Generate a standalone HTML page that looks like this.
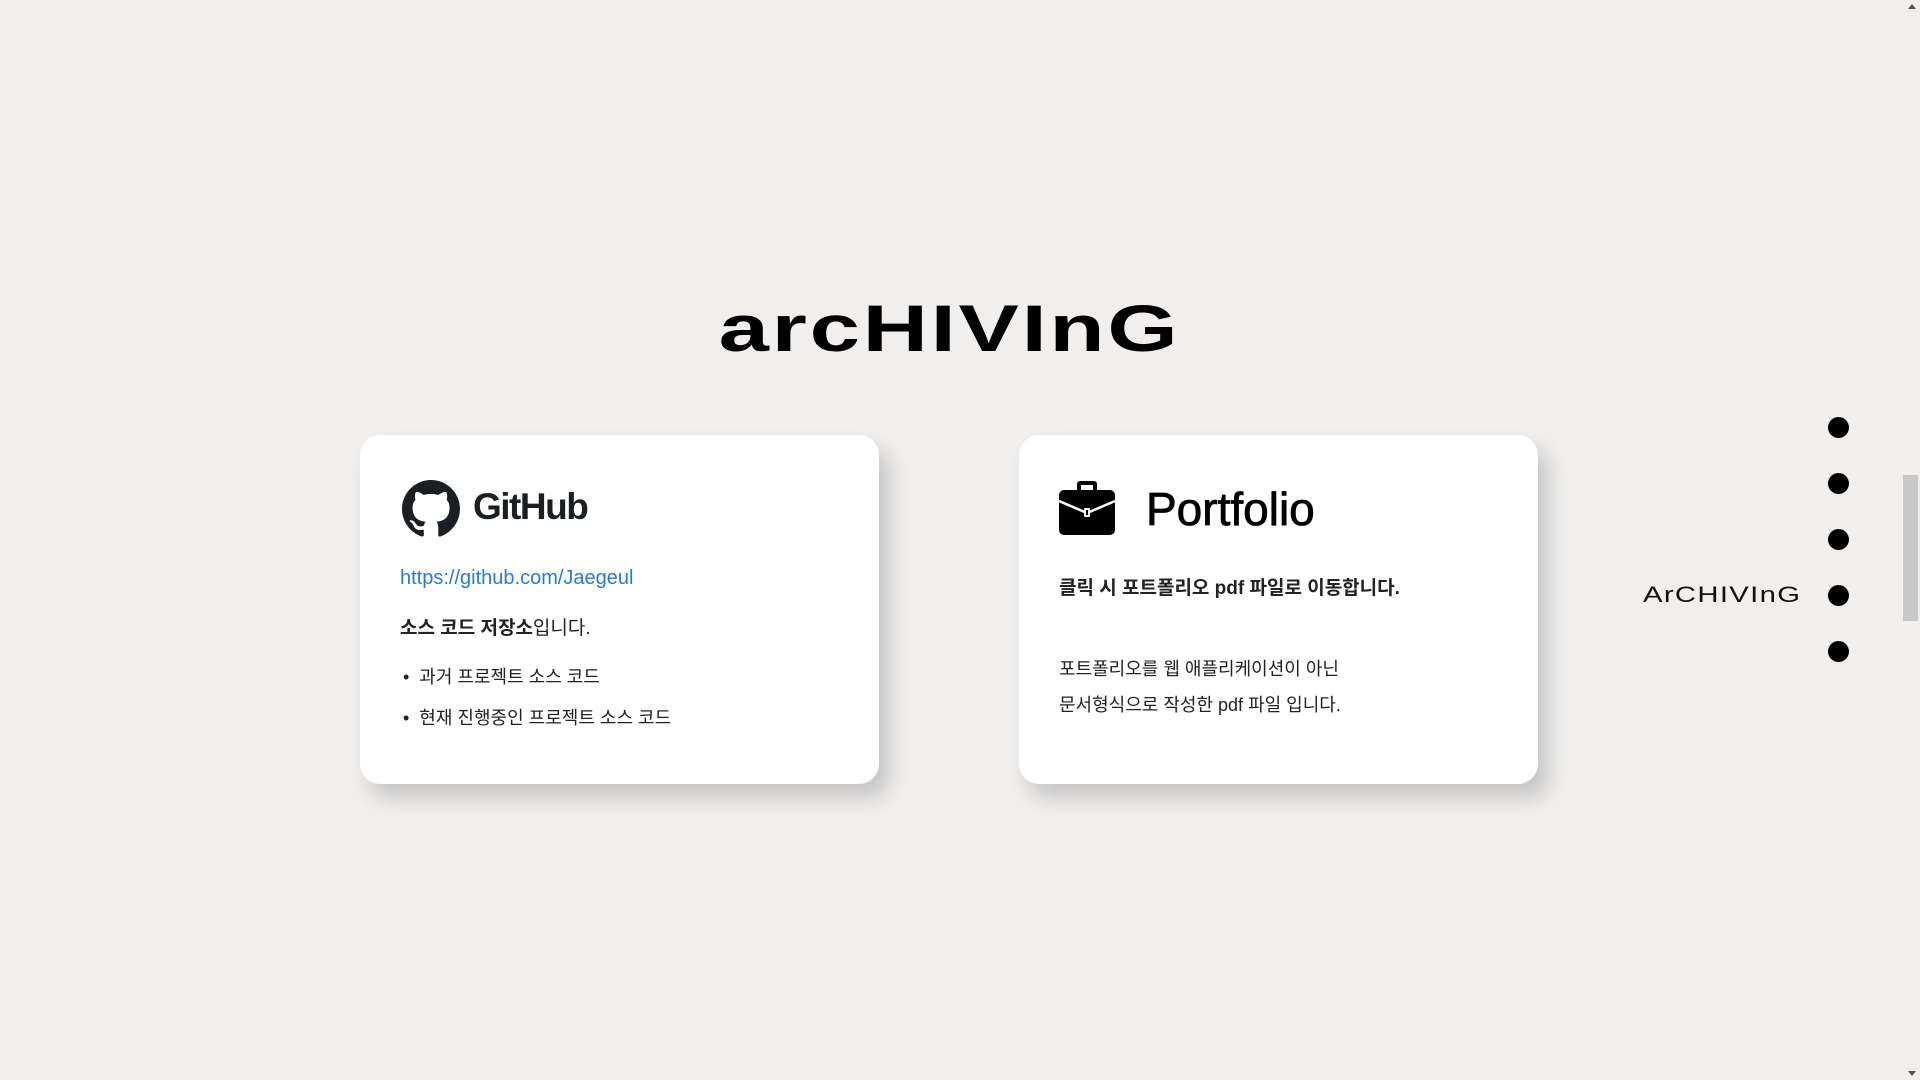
<!DOCTYPE html>
<html><head><meta charset="utf-8"><style>
*{margin:0;padding:0;box-sizing:border-box}
body{width:1920px;height:1080px;background:#f0efee;font-family:"Liberation Sans","Noto Sans CJK KR",sans-serif;position:relative;overflow:hidden;color:#222}
.title{position:absolute;left:0;width:1900px;top:290px;text-align:center;font-size:66px;font-weight:bold;letter-spacing:2px;color:#000}
.title span{display:inline-block;transform:scaleX(1.37);transform-origin:center}
.card{position:absolute;top:435px;width:519px;height:349px;background:#fff;border-radius:20px;box-shadow:10px 14px 22px rgba(0,0,0,.18)}
.abs{position:absolute;white-space:nowrap}
.dot{position:absolute;left:1828px;width:21px;height:21px;border-radius:50%;background:#000}
.sb{position:absolute;right:0;top:0;width:17px;height:1080px;background:#f0efee}
.thumb{position:absolute;right:2px;top:475px;width:15px;height:146px;background:#c8c8c8}
</style></head><body>
<div class="title"><span>arcHIVInG</span></div>

<div class="card" style="left:360px">
 <svg class="abs" style="left:42px;top:45px" width="58" height="58" viewBox="0 0 16 16"><path fill="#1b1f23" d="M8 0C3.58 0 0 3.580 0 8c0 3.54 2.29 6.53 5.47 7.59.4.07.55-.17.55-.38 0-.19-.01-.82-.01-1.49-2.01.37-2.53-.49-2.690-.94-.09-.23-.48-.94-.82-1.13-.28-.15-.68-.52-.01-.53.63-.01 1.08.58 1.23.82.72 1.21 1.87.87 2.33.66.07-.52.28-.87.51-1.07-1.78-.2-3.64-.89-3.64-3.95 0-.87.31-1.59.82-2.15-.08-.2-.36-1.02.08-2.12 0 0 .67-.21 2.2.82.64-.18 1.32-.27 2-.27.68 0 1.36.09 2 .27 1.53-1.04 2.2-.82 2.2-.82.44 1.1.16 1.92.08 2.12.51.56.82 1.27.82 2.15 0 3.07-1.87 3.75-3.65 3.95.29.25.54.73.54 1.48 0 1.07-.01 1.93-.01 2.2 0 .21.15.46.55.38A8.013 8.013 0 0016 8c0-4.42-3.58-8-8-8z"/></svg>
 <div class="abs" style="left:113px;top:51px;font-size:37px;font-weight:bold;color:#1b1f23;letter-spacing:-1.5px">GitHub</div>
 <div class="abs" style="left:40px;top:132px;font-size:20px;color:#2a7ad5">https://github.com/Jaegeul</div>
 <div class="abs" style="left:40px;top:178px;font-size:19px"><b>소스 코드 저장소</b>입니다.</div>
 <div class="abs" style="left:43px;top:228px;font-size:18px">•&nbsp; 과거 프로젝트 소스 코드</div>
 <div class="abs" style="left:43px;top:269px;font-size:18px">•&nbsp; 현재 진행중인 프로젝트 소스 코드</div>
</div>

<div class="card" style="left:1019px">
 <svg class="abs" style="left:40px;top:44px" width="56" height="56" viewBox="0 0 56 56"><path fill="#000" d="M21 2h14a3 3 0 013 3v6h-4V6H22v5h-4V5a3 3 0 013-3z"/><rect x="0" y="11" width="56" height="45" rx="5" fill="#000"/><path d="M0 22 L28 34 L56 22" stroke="#fff" stroke-width="2.5" fill="none"/><rect x="25" y="29" width="6" height="9" rx="1" fill="#fff"/><rect x="27" y="31" width="2" height="5" fill="#000"/></svg>
 <div class="abs" style="left:127px;top:47px;font-size:46px;color:#000;-webkit-text-stroke:0.8px #000">Portfolio</div>
 <div class="abs" style="left:40px;top:138px;font-size:19px;font-weight:bold">클릭 시 포트폴리오 pdf 파일로 이동합니다.</div>
 <div class="abs" style="left:40px;top:220px;font-size:18px">포트폴리오를 웹 애플리케이션이 아닌</div>
 <div class="abs" style="left:40px;top:256px;font-size:18px">문서형식으로 작성한 pdf 파일 입니다.</div>
</div>

<div class="dot" style="top:417px"></div>
<div class="dot" style="top:473px"></div>
<div class="dot" style="top:529px"></div>
<div class="dot" style="top:585px"></div>
<div class="dot" style="top:641px"></div>
<div class="abs" style="left:1643px;top:582px;font-size:22px;color:#111;letter-spacing:1px"><span style="display:inline-block;transform:scaleX(1.33);transform-origin:left;font-weight:300">ArCHIVInG</span></div>

<div class="sb"><div class="thumb"></div>
<div class="abs" style="right:4px;top:4px;width:0;height:0;border:4px solid transparent;border-bottom:5px solid #555;border-top:0"></div>
<div class="abs" style="right:4px;bottom:4px;width:0;height:0;border:4px solid transparent;border-top:5px solid #555;border-bottom:0"></div>
</div>
</body></html>
